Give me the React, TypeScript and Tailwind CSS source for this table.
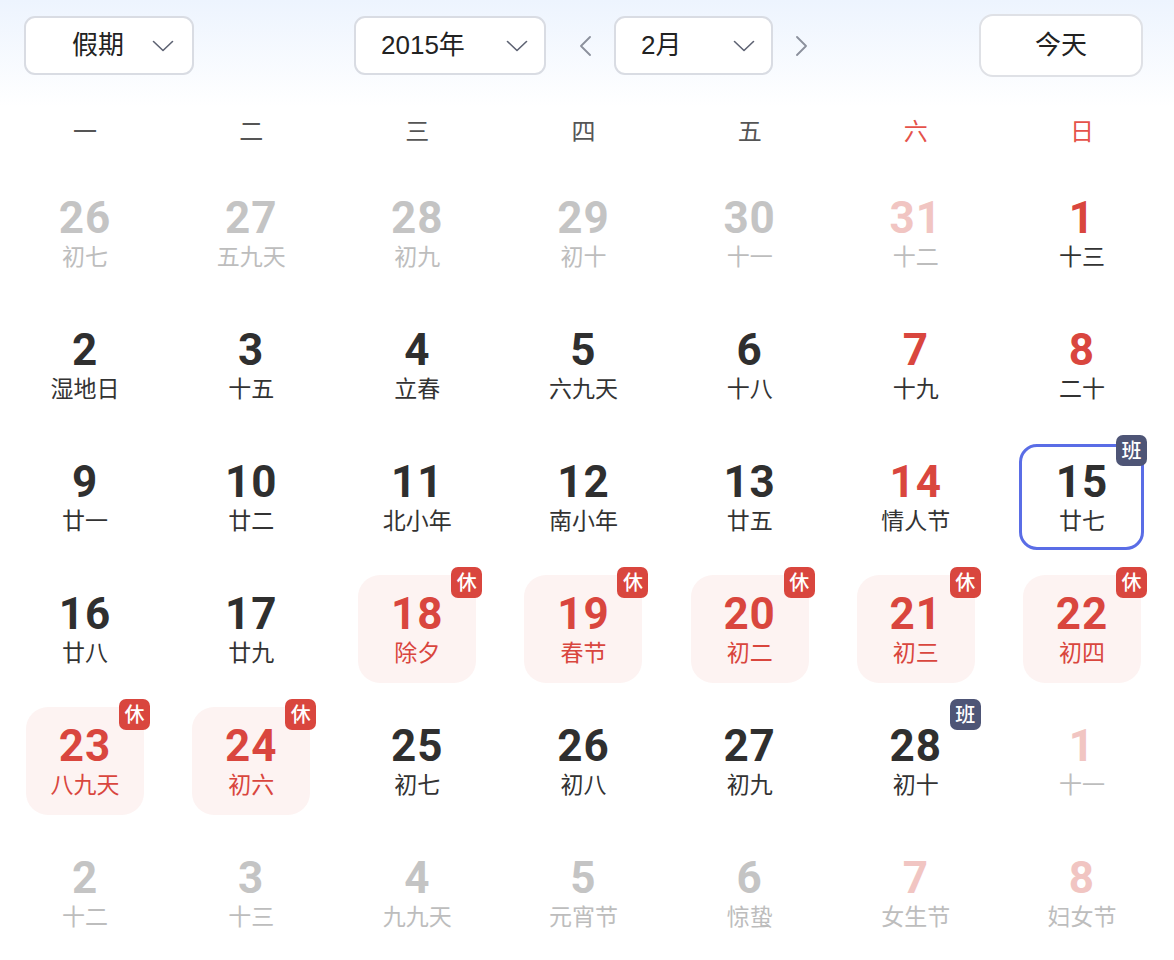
import React from 'react';

type Kind = 'normal' | 'weekend' | 'other' | 'otherWeekend' | 'holiday' | 'selected';

interface Day {
  n: number;
  lunar: string;
  kind?: Kind;
  badge?: '休' | '班';
}

const weeks: Day[][] = [
  [
    { n: 26, lunar: '初七', kind: 'other' },
    { n: 27, lunar: '五九天', kind: 'other' },
    { n: 28, lunar: '初九', kind: 'other' },
    { n: 29, lunar: '初十', kind: 'other' },
    { n: 30, lunar: '十一', kind: 'other' },
    { n: 31, lunar: '十二', kind: 'otherWeekend' },
    { n: 1, lunar: '十三', kind: 'weekend' },
  ],
  [
    { n: 2, lunar: '湿地日' },
    { n: 3, lunar: '十五' },
    { n: 4, lunar: '立春' },
    { n: 5, lunar: '六九天' },
    { n: 6, lunar: '十八' },
    { n: 7, lunar: '十九', kind: 'weekend' },
    { n: 8, lunar: '二十', kind: 'weekend' },
  ],
  [
    { n: 9, lunar: '廿一' },
    { n: 10, lunar: '廿二' },
    { n: 11, lunar: '北小年' },
    { n: 12, lunar: '南小年' },
    { n: 13, lunar: '廿五' },
    { n: 14, lunar: '情人节', kind: 'weekend' },
    { n: 15, lunar: '廿七', kind: 'selected', badge: '班' },
  ],
  [
    { n: 16, lunar: '廿八' },
    { n: 17, lunar: '廿九' },
    { n: 18, lunar: '除夕', kind: 'holiday', badge: '休' },
    { n: 19, lunar: '春节', kind: 'holiday', badge: '休' },
    { n: 20, lunar: '初二', kind: 'holiday', badge: '休' },
    { n: 21, lunar: '初三', kind: 'holiday', badge: '休' },
    { n: 22, lunar: '初四', kind: 'holiday', badge: '休' },
  ],
  [
    { n: 23, lunar: '八九天', kind: 'holiday', badge: '休' },
    { n: 24, lunar: '初六', kind: 'holiday', badge: '休' },
    { n: 25, lunar: '初七' },
    { n: 26, lunar: '初八' },
    { n: 27, lunar: '初九' },
    { n: 28, lunar: '初十', badge: '班' },
    { n: 1, lunar: '十一', kind: 'otherWeekend' },
  ],
  [
    { n: 2, lunar: '十二', kind: 'other' },
    { n: 3, lunar: '十三', kind: 'other' },
    { n: 4, lunar: '九九天', kind: 'other' },
    { n: 5, lunar: '元宵节', kind: 'other' },
    { n: 6, lunar: '惊蛰', kind: 'other' },
    { n: 7, lunar: '女生节', kind: 'otherWeekend' },
    { n: 8, lunar: '妇女节', kind: 'otherWeekend' },
  ],
];

const weekdays = ['一', '二', '三', '四', '五', '六', '日'];

function ChevronDown() {
  return (
    <svg width="22" height="12" viewBox="0 0 22 12" fill="none">
      <path d="M1.5 1.5l9.5 9 9.5-9" stroke="#5d6272" strokeWidth="1.6" strokeLinecap="round" strokeLinejoin="round" />
    </svg>
  );
}

function Arrow({ dir }: { dir: 'left' | 'right' }) {
  return (
    <svg width="14" height="20" viewBox="0 0 14 20" fill="none">
      <path
        d={dir === 'left' ? 'M12 1L3 10l9 9' : 'M2 1l9 9-9 9'}
        stroke="#8b909c"
        strokeWidth="1.8"
        strokeLinecap="round"
        strokeLinejoin="round"
      />
    </svg>
  );
}

function Select({ label, width, pad }: { label: string; width: string; pad: string }) {
  return (
    <div
      className={`flex items-center justify-between h-[59px] ${width} ${pad} bg-white border-2 border-[#d9dce3] rounded-[11px]`}
    >
      <span className="text-[26px] text-[#222]">{label}</span>
      <ChevronDown />
    </div>
  );
}

function Cell({ d }: { d: Day }) {
  const kind = d.kind ?? 'normal';
  const numColor =
    kind === 'other'
      ? 'text-[#c4c4c4]'
      : kind === 'otherWeekend'
      ? 'text-[#f1c5c2]'
      : kind === 'weekend' || kind === 'holiday'
      ? 'text-[#d9463e]'
      : 'text-[#2f2f2f]';
  const lunarColor =
    kind === 'other' || kind === 'otherWeekend'
      ? 'text-[#bdbdbd]'
      : kind === 'holiday'
      ? 'text-[#d9463e]'
      : 'text-[#333]';
  const box =
    kind === 'holiday'
      ? 'w-[118px] h-[108px] rounded-[22px] bg-[#fdf3f2]'
      : kind === 'selected'
      ? 'w-[125px] h-[106px] rounded-[18px] border-[3px] border-[#5a6de6]'
      : 'w-[118px] h-[108px]';

  return (
    <div className="relative flex items-center justify-center h-[132px]">
      <div className={`flex flex-col items-center justify-center ${box}`}>
        <span
          className={`font-['Roboto'] font-bold text-[44px] leading-[44px] tracking-[1px] ${numColor}`}
        >
          {d.n}
        </span>
        <span className={`mt-[4px] text-[23px] leading-[27px] ${lunarColor}`}>{d.lunar}</span>
      </div>
      {d.badge && (
        <span
          className={`absolute left-[calc(50%+34px)] top-[calc(50%-62px)] flex items-center justify-center w-[31px] h-[31px] rounded-[7px] text-[20px] leading-none font-medium text-white ${
            d.badge === '休' ? 'bg-[#d9463e]' : 'bg-[#4e5576]'
          }`}
        >
          {d.badge}
        </span>
      )}
    </div>
  );
}

export default function App() {
  return (
    <div className="w-[1174px] h-[960px] bg-white overflow-hidden font-['Liberation_Sans','Noto_Sans_CJK_SC',sans-serif]">
      {/* top bar */}
      <div className="h-[107px] pt-[14px] bg-gradient-to-b from-[#edf4fe] to-white">
        <div className="flex items-center h-[63px] pl-[24px]">
          <Select label="假期" width="w-[170px]" pad="pl-[46px] pr-[18px]" />
          <div className="ml-[160px]">
            <Select label="2015年" width="w-[192px]" pad="pl-[25px] pr-[16px]" />
          </div>
          <div className="ml-[32px]">
            <Arrow dir="left" />
          </div>
          <div className="ml-[22px]">
            <Select label="2月" width="w-[159px]" pad="pl-[25px] pr-[16px]" />
          </div>
          <div className="ml-[22px]">
            <Arrow dir="right" />
          </div>
          <button className="ml-[170px] h-[63px] w-[164px] bg-white border-2 border-[#dfe1e6] rounded-[14px] text-[26px] text-[#222]">
            今天
          </button>
        </div>
      </div>

      {/* weekdays */}
      <div className="grid grid-cols-7 w-[1163px] ml-[2px] h-[48px]">
        {weekdays.map((w, i) => (
          <div
            key={w}
            className={`flex items-center justify-center pt-[2px] text-[24px] ${i >= 5 ? 'text-[#e5524a]' : 'text-[#555]'}`}
          >
            {w}
          </div>
        ))}
      </div>

      {/* days */}
      <div className="grid grid-cols-7 w-[1163px] ml-[2px] mt-[12px]">
        {weeks.flat().map((d, i) => (
          <Cell key={i} d={d} />
        ))}
      </div>
    </div>
  );
}
